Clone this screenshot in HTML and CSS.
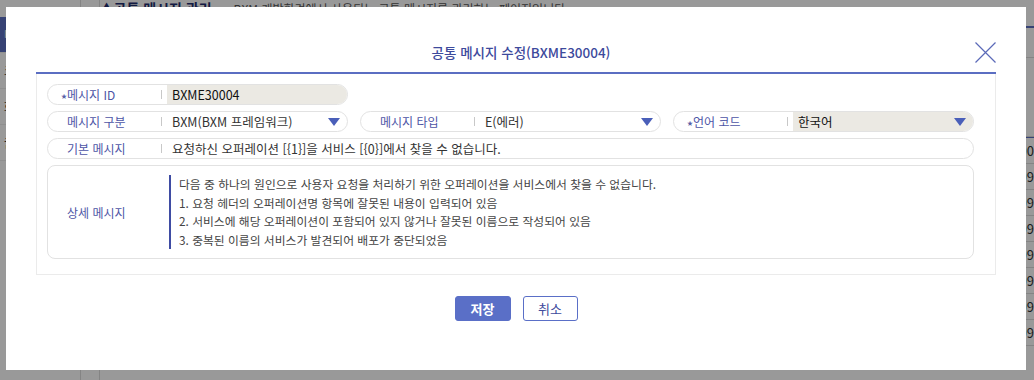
FILE: index.html
```html
<!DOCTYPE html>
<html lang="ko">
<head>
    <meta charset="UTF-8">
    <meta name="viewport" content="width=device-width, initial-scale=1.0">
    <title>공통 메시지 관리</title>
    <link rel="stylesheet" href="styles.css">
</head>
<body>
    <div class="app">
        <aside class="sidebar">
            <div class="menu-item active">메시지 관리</div>
            <div class="menu-item">코드 관리</div>
            <div class="menu-item">화면 관리</div>
            <div class="menu-item">권한 관리</div>
        </aside>
        <main class="main">
            <div class="page-head">
                <h2 class="page-title">▲공통 메시지 관리</h2>
                <span class="page-desc">BXM 개발환경에서 사용되는 공통 메시지를 관리하는 페이지입니다.</span>
            </div>
            <div class="search-bar"></div>
            <div class="search-row"></div>
            <div class="grid-head"></div>
            <div class="grid-row">00</div>
            <div class="grid-row">09</div>
            <div class="grid-row">09</div>
            <div class="grid-row">09</div>
            <div class="grid-row">09</div>
            <div class="grid-row">09</div>
            <div class="grid-row">09</div>
            <div class="grid-row">09</div>
        </main>
    </div>

    <div class="overlay"></div>

    <div class="modal">
        <div class="modal-header">
            <h3 class="modal-title">공통 메시지 수정(BXME30004)</h3>
            <button class="modal-close" type="button" aria-label="닫기">
                <svg width="21" height="21" viewBox="0 0 21 21">
                    <path d="M0.5 0.5 L20.5 20.5 M20.5 0.5 L0.5 20.5" stroke="#5b6ab8" stroke-width="1.2" fill="none"/>
                </svg>
            </button>
        </div>

        <div class="form-box">
            <div class="form-grid">
                <div class="field">
                    <label class="field-label"><span class="req">★</span>메시지 ID</label>
                    <div class="field-value readonly">BXME30004</div>
                </div>
                <div class="field-empty"></div>
                <div class="field-empty"></div>

                <div class="field">
                    <label class="field-label">메시지 구분</label>
                    <div class="field-value select">BXM(BXM 프레임워크)<span class="caret"></span></div>
                </div>
                <div class="field">
                    <label class="field-label">메시지 타입</label>
                    <div class="field-value select">E(에러)<span class="caret"></span></div>
                </div>
                <div class="field">
                    <label class="field-label"><span class="req">★</span>언어 코드</label>
                    <div class="field-value select readonly">한국어<span class="caret"></span></div>
                </div>

                <div class="field wide">
                    <label class="field-label">기본 메시지</label>
                    <div class="field-value">요청하신 오퍼레이션 [{1}]을 서비스 [{0}]에서 찾을 수 없습니다.</div>
                </div>

                <div class="detail wide">
                    <label class="detail-label">상세 메시지</label>
                    <div class="detail-text">
                        다음 중 하나의 원인으로 사용자 요청을 처리하기 위한 오퍼레이션을 서비스에서 찾을 수 없습니다.<br>
                        1. 요청 헤더의 오퍼레이션명 항목에 잘못된 내용이 입력되어 있음<br>
                        2. 서비스에 해당 오퍼레이션이 포함되어 있지 않거나 잘못된 이름으로 작성되어 있음<br>
                        3. 중복된 이름의 서비스가 발견되어 배포가 중단되었음
                    </div>
                </div>
            </div>
        </div>

        <div class="modal-buttons">
            <button class="btn btn-primary" type="button">저장</button>
            <button class="btn btn-outline" type="button">취소</button>
        </div>
    </div>
</body>
</html>
```

FILE: styles.css
```css
* {
    box-sizing: border-box;
}
body {
    margin: 0;
    font-family: "Noto Sans CJK KR", "Noto Sans", sans-serif;
    font-size: 12px;
    color: #333;
    background-color: #fff;
    overflow: hidden;
}

/* page behind the dialog */
.app {
    display: flex;
    height: 380px;
}
.sidebar {
    width: 86px;
    border-right: 1px solid #ddd;
    padding-top: 17px;
    background-color: #fff;
}
.menu-item {
    height: 36px;
    line-height: 36px;
    padding-left: 4px;
    color: #333;
    white-space: nowrap;
    overflow: hidden;
    border-bottom: 1px solid #eee;
}
.menu-item.active {
    background-color: #5b6ec2;
    color: #fff;
}
.main {
    flex: 1;
    margin-left: 18px;
    border-left: 1px solid #ddd;
}
.page-head {
    display: flex;
    align-items: baseline;
    gap: 22px;
    height: 28px;
    border-bottom: 2px solid #5b6ec2;
}
.page-title {
    margin: -4px 0 0;
    font-size: 14px;
    line-height: 20px;
    color: #1f2d6e;
}
.page-desc {
    color: #555;
}
.search-bar {
    height: 30px;
    border-bottom: 1px solid #ddd;
}
.search-row {
    height: 79px;
    border-bottom: 1px solid #ddd;
}
.grid-head {
    height: 1px;
    background-color: #5b6ec2;
}
.grid-row {
    height: 26px;
    line-height: 26px;
    padding-left: 920px;
    border-bottom: 1px solid #ddd;
    font-size: 13px;
}

.overlay {
    position: fixed;
    inset: 0;
    background-color: rgba(0, 0, 0, 0.4);
}

/* dialog */
.modal {
    position: absolute;
    left: 6px;
    top: 7px;
    width: 1020px;
    height: 363px;
    background-color: #fff;
    padding: 0 30px;
}
.modal-header {
    position: relative;
    height: 67px;
    padding-top: 35px;
    padding-left: 10px;
    border-bottom: 2px solid #5b6ec2;
    text-align: center;
}
.modal-title {
    margin: 0;
    font-size: 13.5px;
    font-weight: 500;
    color: #3d4a9c;
    line-height: 20px;
}
.modal-close {
    position: absolute;
    right: 0;
    top: 35px;
    padding: 0;
    border: none;
    background: none;
    width: 21px;
    height: 21px;
    cursor: pointer;
}
.modal-close svg {
    display: block;
}

.form-box {
    border: 1px solid #ebebeb;
    border-top: none;
    padding: 10px 21px 15px 10px;
}
.form-grid {
    display: grid;
    grid-template-columns: 1fr 1fr 1fr;
    column-gap: 12px;
    row-gap: 6px;
}
.wide {
    grid-column: 1 / 4;
}
.field {
    display: flex;
    align-items: center;
    height: 21px;
    border: 1px solid #e2e2e2;
    border-radius: 11px;
    overflow: hidden;
}
.field-label {
    position: relative;
    width: 119px;
    flex-shrink: 0;
    padding-left: 19px;
    color: #4d55a6;
    line-height: 19px;
}
.field-label::after {
    content: "";
    position: absolute;
    right: 5px;
    top: 5px;
    width: 1px;
    height: 9px;
    background-color: #c8c8c8;
}
.req {
    display: inline-block;
    width: 6px;
    margin-left: -6px;
    font-size: 6px;
    line-height: 6px;
    vertical-align: 2px;
    color: #5a5fa8;
}
.field-value {
    position: relative;
    flex: 1;
    height: 100%;
    padding-left: 5px;
    font-size: 12.5px;
    line-height: 19px;
    color: #333;
    white-space: nowrap;
}
.field-value.readonly {
    background-color: #ebe9e3;
    color: #111;
}
.caret {
    position: absolute;
    right: 7px;
    top: 6px;
    width: 0;
    height: 0;
    border-left: 6px solid transparent;
    border-right: 6px solid transparent;
    border-top: 8px solid #4a5fb9;
}

.detail {
    display: flex;
    align-items: center;
    height: 94px;
    border: 1px solid #e2e2e2;
    border-radius: 8px;
}
.detail-label {
    width: 121px;
    flex-shrink: 0;
    padding-left: 19px;
    color: #4d55a6;
}
.detail-text {
    border-left: 2px solid #3f4ca3;
    padding-left: 8px;
    font-size: 11.8px;
    line-height: 18.5px;
    color: #444;
}

.modal-buttons {
    display: flex;
    justify-content: center;
    gap: 12px;
    margin-top: 21px;
}
.btn {
    height: 25px;
    width: 56px;
    padding: 0;
    border-radius: 3px;
    font-family: inherit;
    font-size: 13px;
    cursor: pointer;
}
.btn-primary {
    background-color: #5a6fc7;
    border: 1px solid #5a6fc7;
    color: #fff;
    font-weight: 700;
}
.btn-outline {
    width: 55px;
    background-color: #fff;
    border: 1px solid #5a6fc7;
    color: #3d4a9c;
}
```
